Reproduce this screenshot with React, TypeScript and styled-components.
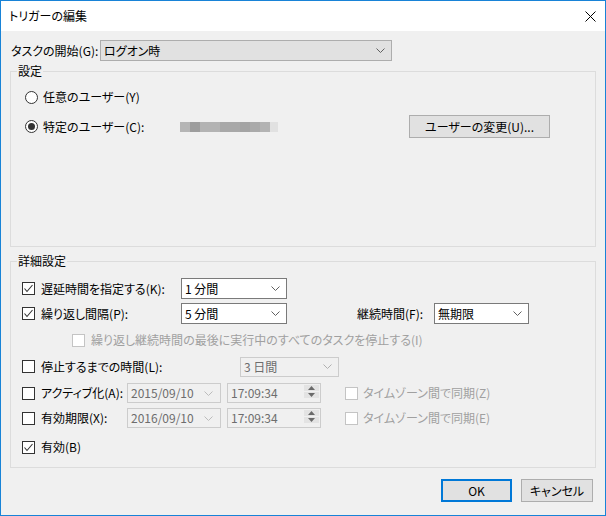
import styled, { createGlobalStyle, css } from "styled-components";

const GlobalStyle = createGlobalStyle`
  html, body {
    margin: 0;
    padding: 0;
    background: #f0f0f0;
  }
  body {
    font-family: "Noto Sans CJK JP", "Noto Sans", sans-serif;
    font-size: 12px;
    font-feature-settings: "palt";
    color: #000;
  }
  * {
    box-sizing: border-box;
  }
`;

const Window = styled.div`
  width: 606px;
  height: 516px;
  border: 1px solid #1883d7;
  display: flex;
  flex-direction: column;
  background: #f0f0f0;
`;

const TitleBar = styled.div`
  height: 30px;
  flex: none;
  background: #fff;
  display: flex;
  align-items: center;
  justify-content: space-between;
  padding: 0 9px 0 8px;
`;

const Title = styled.span`
  line-height: 14px;
`;

const Body = styled.div`
  flex: 1;
  display: flex;
  flex-direction: column;
  padding: 9px 9px 0;
`;

const Row = styled.div<{ $mt?: number; $h?: number; $ml?: number }>`
  display: flex;
  align-items: center;
  flex: none;
  height: ${(p) => p.$h ?? 21}px;
  margin-top: ${(p) => p.$mt ?? 0}px;
  margin-left: ${(p) => p.$ml ?? 0}px;
`;

const FieldLabel = styled.span<{ $w?: number; $ml?: number }>`
  flex: none;
  width: ${(p) => (p.$w ? `${p.$w}px` : "auto")};
  margin-left: ${(p) => p.$ml ?? 0}px;
  white-space: nowrap;
  line-height: 14px;
`;

type ComboKind = "button" | "field" | "disabled";

const Combo = styled.div<{ $w: number; $kind: ComboKind; $h?: number }>`
  flex: none;
  display: flex;
  align-items: center;
  justify-content: space-between;
  width: ${(p) => p.$w}px;
  height: ${(p) => p.$h ?? 21}px;
  padding: 0 6px 0 3px;
  line-height: 14px;
  white-space: nowrap;
  ${(p) =>
    p.$kind === "button"
      ? css`
          background: #e1e1e1;
          border: 1px solid #adadad;
        `
      : p.$kind === "field"
      ? css`
          background: #fff;
          border: 1px solid #7a7a7a;
        `
      : css`
          background: #f0f0f0;
          border: 1px solid #cccccc;
          color: #6d6d6d;
        `}
`;

const Group = styled.fieldset<{ $h: number; $mt: number }>`
  margin: ${(p) => p.$mt}px 0 0;
  padding: 0;
  border: 1px solid #dcdcdc;
  height: ${(p) => p.$h}px;
  min-inline-size: 0;
  flex: none;
`;

const Legend = styled.legend`
  margin-left: 6px;
  padding: 0 1px;
  line-height: 14px;
  font-size: 12px;
`;

const GroupContent = styled.div<{ $pt: number; $pl: number }>`
  display: flex;
  flex-direction: column;
  padding: ${(p) => p.$pt}px 0 0 ${(p) => p.$pl}px;
`;

const CheckItem = styled.label<{ $w?: number; $disabled?: boolean; $gap?: number }>`
  flex: none;
  display: flex;
  align-items: center;
  gap: ${(p) => p.$gap ?? 6}px;
  width: ${(p) => (p.$w ? `${p.$w}px` : "auto")};
  color: ${(p) => (p.$disabled ? "#a0a0a0" : "#000")};
  white-space: nowrap;
  line-height: 14px;
`;

const Box = styled.span<{ $disabled?: boolean }>`
  flex: none;
  width: 13px;
  height: 13px;
  border: 1px solid ${(p) => (p.$disabled ? "#c4c4c4" : "#333")};
  background: #fff;
  display: flex;
  align-items: center;
  justify-content: center;
`;

const RadioCircle = styled.span<{ $checked?: boolean }>`
  flex: none;
  width: 13px;
  height: 13px;
  border-radius: 50%;
  border: 1px solid #333;
  background: #fff;
  display: flex;
  align-items: center;
  justify-content: center;

  &::after {
    content: "";
    width: 7px;
    height: 7px;
    border-radius: 50%;
    background: #333;
    display: ${(p) => (p.$checked ? "block" : "none")};
  }
`;

const Pixelated = styled.span`
  flex: none;
  display: flex;
  width: 98px;
  height: 10px;
`;

const Pixel = styled.span<{ $c: string; $w: number }>`
  width: ${(p) => p.$w}px;
  height: 100%;
  background: ${(p) => p.$c};
`;

const Button = styled.button<{ $w: number; $default?: boolean; $ml?: number }>`
  flex: none;
  width: ${(p) => p.$w}px;
  height: 23px;
  margin-left: ${(p) => p.$ml ?? 0}px;
  padding: 0;
  font: inherit;
  line-height: 14px;
  color: #000;
  background: #e1e1e1;
  border: ${(p) => (p.$default ? "2px solid #0078d7" : "1px solid #adadad")};
`;

const PickerBox = styled.div<{ $w: number; $ml?: number }>`
  flex: none;
  display: flex;
  align-items: center;
  width: ${(p) => p.$w}px;
  height: 20px;
  margin-left: ${(p) => p.$ml ?? 0}px;
  padding: 0 7px 0 3px;
  border: 1px solid #cccccc;
  color: #6d6d6d;
  line-height: 14px;
  justify-content: space-between;
`;

const TimeBox = styled(PickerBox)`
  padding: 0 1px 0 3px;
  align-items: flex-start;
`;

const TimeText = styled.span`
  align-self: center;
`;

const Spin = styled.span`
  display: flex;
  flex-direction: column;
  gap: 1px;
  margin-top: 1px;
  width: 15px;
`;

const SpinHalf = styled.span`
  height: 6px;
  background: #e3e3e3;
  display: flex;
  align-items: center;
  justify-content: center;
`;

const Footer = styled.div`
  display: flex;
  justify-content: flex-end;
  gap: 9px;
  margin-top: 11px;
  padding-right: 3px;
`;

const Chevron = ({ color = "#606060" }: { color?: string }) => (
  <svg width="9" height="5" viewBox="0 0 9 5">
    <polyline points="0.5,0.5 4.5,4.5 8.5,0.5" fill="none" stroke={color} strokeWidth="1" />
  </svg>
);

const CheckMark = () => (
  <svg width="11" height="11" viewBox="0 0 11 11">
    <polyline points="1.5,5.5 4,8.5 9.5,2" fill="none" stroke="#333" strokeWidth="1.1" />
  </svg>
);

const CheckBox = ({ checked, disabled }: { checked?: boolean; disabled?: boolean }) => (
  <Box $disabled={disabled}>{checked && <CheckMark />}</Box>
);

const Arrow = ({ up }: { up?: boolean }) => (
  <svg width="7" height="4" viewBox="0 0 7 4">
    <polygon points={up ? "0,4 3.5,0 7,4" : "0,0 3.5,4 7,0"} fill="#6a6a6a" />
  </svg>
);

const blur = [
  { c: "#b5b5b5", w: 10 },
  { c: "#9d9d9d", w: 10 },
  { c: "#b3b3b3", w: 10 },
  { c: "#b3b3b3", w: 10 },
  { c: "#a8a8a8", w: 10 },
  { c: "#a8a8a8", w: 10 },
  { c: "#a4a4a4", w: 10 },
  { c: "#aaaaaa", w: 10 },
  { c: "#b3b3b3", w: 10 },
  { c: "#e1e1e1", w: 8 },
];

export default function App() {
  return (
    <>
      <GlobalStyle />
      <Window>
        <TitleBar>
          <Title>トリガーの編集</Title>
          <svg width="11" height="11" viewBox="0 0 11 11">
            <path d="M0.5 0.5 L10.5 10.5 M10.5 0.5 L0.5 10.5" stroke="#000" strokeWidth="1" />
          </svg>
        </TitleBar>

        <Body>
          {/* タスクの開始 */}
          <Row>
            <FieldLabel $w={89} $ml={1}>タスクの開始(G):</FieldLabel>
            <Combo $w={292} $kind="button">
              <span>ログオン時</span>
              <Chevron />
            </Combo>
          </Row>

          {/* 設定 */}
          <Group $mt={3} $h={183}>
            <Legend>設定</Legend>
            <GroupContent $pt={9} $pl={14}>
              <Row $h={20}>
                <CheckItem $gap={5}>
                  <RadioCircle />
                  任意のユーザー(Y)
                </CheckItem>
              </Row>
              <Row $h={23} $mt={8}>
                <CheckItem $gap={5} $w={155}>
                  <RadioCircle $checked />
                  特定のユーザー(C):
                </CheckItem>
                <Pixelated>
                  {blur.map((b, i) => (
                    <Pixel key={i} $c={b.c} $w={b.w} />
                  ))}
                </Pixelated>
                <Button $w={141} $ml={131}>ユーザーの変更(U)...</Button>
              </Row>
            </GroupContent>
          </Group>

          {/* 詳細設定 */}
          <Group $mt={7} $h={214}>
            <Legend>詳細設定</Legend>
            <GroupContent $pt={10} $pl={11}>
              <Row>
                <CheckItem $w={159}>
                  <CheckBox checked />
                  遅延時間を指定する(K):
                </CheckItem>
                <Combo $w={106} $kind="field">
                  <span>1 分間</span>
                  <Chevron />
                </Combo>
              </Row>

              <Row $mt={4}>
                <CheckItem $w={159}>
                  <CheckBox checked />
                  繰り返し間隔(P):
                </CheckItem>
                <Combo $w={106} $kind="field">
                  <span>5 分間</span>
                  <Chevron />
                </Combo>
                <FieldLabel $w={77} $ml={70}>継続時間(F):</FieldLabel>
                <Combo $w={95} $kind="field">
                  <span>無期限</span>
                  <Chevron />
                </Combo>
              </Row>

              <Row $mt={7} $h={18} $ml={50}>
                <CheckItem $disabled>
                  <CheckBox disabled />
                  繰り返し継続時間の最後に実行中のすべてのタスクを停止する(I)
                </CheckItem>
              </Row>

              <Row $mt={7}>
                <CheckItem $w={218}>
                  <CheckBox />
                  停止するまでの時間(L):
                </CheckItem>
                <Combo $w={99} $h={20} $kind="disabled">
                  <span>3 日間</span>
                  <Chevron color="#b0b0b0" />
                </Combo>
              </Row>

              <Row $mt={6} $h={20}>
                <CheckItem $w={105}>
                  <CheckBox />
                  アクティブ化(A):
                </CheckItem>
                <PickerBox $w={94}>
                  <span>2015/09/10</span>
                  <Chevron color="#bcbcbc" />
                </PickerBox>
                <TimeBox $w={94} $ml={6}>
                  <TimeText>17:09:34</TimeText>
                  <Spin>
                    <SpinHalf>
                      <Arrow up />
                    </SpinHalf>
                    <SpinHalf>
                      <Arrow />
                    </SpinHalf>
                  </Spin>
                </TimeBox>
                <Row $ml={24} $h={20}>
                  <CheckItem $disabled $gap={5}>
                    <CheckBox disabled />
                    タイムゾーン間で同期(Z)
                  </CheckItem>
                </Row>
              </Row>

              <Row $mt={5} $h={20}>
                <CheckItem $w={105}>
                  <CheckBox />
                  有効期限(X):
                </CheckItem>
                <PickerBox $w={94}>
                  <span>2016/09/10</span>
                  <Chevron color="#bcbcbc" />
                </PickerBox>
                <TimeBox $w={94} $ml={6}>
                  <TimeText>17:09:34</TimeText>
                  <Spin>
                    <SpinHalf>
                      <Arrow up />
                    </SpinHalf>
                    <SpinHalf>
                      <Arrow />
                    </SpinHalf>
                  </Spin>
                </TimeBox>
                <Row $ml={24} $h={20}>
                  <CheckItem $disabled $gap={5}>
                    <CheckBox disabled />
                    タイムゾーン間で同期(E)
                  </CheckItem>
                </Row>
              </Row>

              <Row $mt={9} $h={20}>
                <CheckItem>
                  <CheckBox checked />
                  有効(B)
                </CheckItem>
              </Row>
            </GroupContent>
          </Group>

          <Footer>
            <Button $w={71} $default>OK</Button>
            <Button $w={72}>キャンセル</Button>
          </Footer>
        </Body>
      </Window>
    </>
  );
}
